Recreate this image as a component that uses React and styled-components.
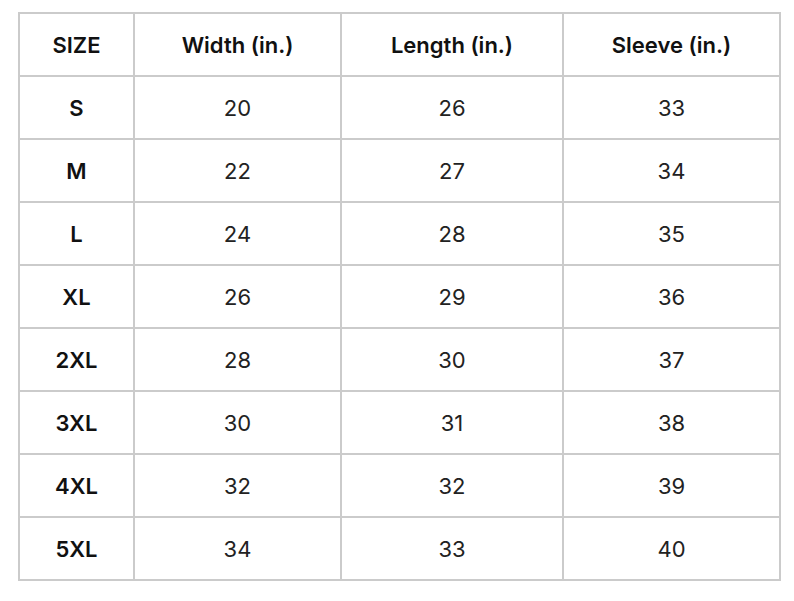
import React from "react";
import styled, { createGlobalStyle } from "styled-components";

const Global = createGlobalStyle`
  html, body { margin: 0; padding: 0; background: #fff; }
  body { font-family: Inter, "Noto Sans", sans-serif; color: #1a1a1a; }
`;

const Page = styled.div`
  padding: 12px 0 0 18px;
`;

const Table = styled.table`
  border-collapse: collapse;
  table-layout: fixed;
  width: 761px;
`;

const Cell = styled.td`
  border: 2px solid #cbcbcb;
  height: 61px;
  padding: 0;
  text-align: center;
  vertical-align: middle;
  font-size: 22px;
  font-weight: ${(p) => (p.$bold ? 600 : 400)};
  color: ${(p) => (p.$bold ? "#111" : "#222")};
`;

const cols = [115, 207, 222, 217];
const head = ["SIZE", "Width (in.)", "Length (in.)", "Sleeve (in.)"];
const rows = [
  ["S", 20, 26, 33],
  ["M", 22, 27, 34],
  ["L", 24, 28, 35],
  ["XL", 26, 29, 36],
  ["2XL", 28, 30, 37],
  ["3XL", 30, 31, 38],
  ["4XL", 32, 32, 39],
  ["5XL", 34, 33, 40],
];

export default function App() {
  return (
    <Page>
      <Global />
      <Table>
        <colgroup>
          {cols.map((w, i) => (
            <col key={i} style={{ width: w }} />
          ))}
        </colgroup>
        <tbody>
          <tr>
            {head.map((h) => (
              <Cell key={h} $bold>
                {h}
              </Cell>
            ))}
          </tr>
          {rows.map((r) => (
            <tr key={r[0]}>
              {r.map((v, i) => (
                <Cell key={i} $bold={i === 0}>
                  {v}
                </Cell>
              ))}
            </tr>
          ))}
        </tbody>
      </Table>
    </Page>
  );
}
